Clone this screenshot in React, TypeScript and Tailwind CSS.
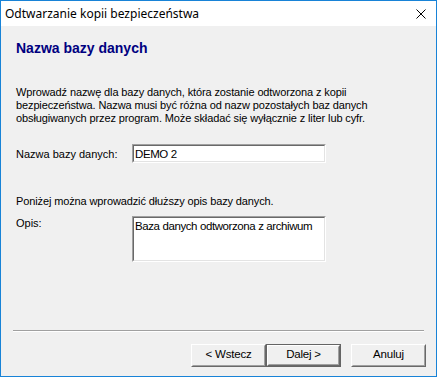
import React from "react";

const sans = { fontFamily: '"Liberation Sans", Arial, sans-serif' };

// classic sunken edit field (Win9x style)
function Sunken({ className, children }: { className: string; children: React.ReactNode }) {
  return (
    <div className={`border border-t-[#a0a0a0] border-l-[#a0a0a0] border-b-white border-r-white ${className}`}>
      <div className="h-full whitespace-nowrap border border-t-[#696969] border-l-[#696969] border-b-[#e3e3e3] border-r-[#e3e3e3] bg-white px-[1px] pt-[1px] text-[11.5px] leading-[14px] tracking-[-0.4px] text-black">
        {children}
      </div>
    </div>
  );
}

function WinButton({ label, isDefault }: { label: string; isDefault?: boolean }) {
  const inner = (
    <div className="flex h-full items-center justify-center border border-t-white border-l-white border-b-[#696969] border-r-[#696969] bg-[#f0f0f0]">
      <div className="flex h-full w-full items-center justify-center border border-t-[#f0f0f0] border-l-[#f0f0f0] border-b-[#a0a0a0] border-r-[#a0a0a0] pb-[1px] text-[11.5px] tracking-[-0.2px] text-black">
        {label}
      </div>
    </div>
  );
  if (isDefault) {
    return <div className="h-[23px] w-[75px] border border-[#646464]">{inner}</div>;
  }
  return <div className="h-[23px] w-[75px]">{inner}</div>;
}

export default function App() {
  return (
    <div className="flex h-[377px] w-[437px] flex-col border border-[#1883d7] bg-[#f0f0f0]" style={sans}>
      {/* title bar */}
      <div className="flex h-[25px] items-center justify-between bg-white pl-[4px] pr-[10px]">
        <span className="text-[12px] text-black" style={{ fontFamily: '"Noto Sans", "Liberation Sans", sans-serif' }}>
          Odtwarzanie kopii bezpieczeństwa
        </span>
        <svg width="10" height="10" viewBox="0 0 10 10">
          <path d="M0.5 0.5 L9.5 9.5 M9.5 0.5 L0.5 9.5" stroke="#000" strokeWidth="1" />
        </svg>
      </div>

      <div className="flex flex-1 flex-col px-[15px]">
        <h1 className="mt-[14px] text-[14px] font-bold leading-[16px] text-[#000080]">Nazwa bazy danych</h1>

        <p className="mt-[30px] text-[11px] leading-[13px] tracking-[-0.12px] text-black">
          Wprowadź nazwę dla bazy danych, która zostanie odtworzona z kopii
          <br />
          bezpieczeństwa. Nazwa musi być różna od nazw pozostałych baz danych
          <br />
          obsługiwanych przez program. Może składać się wyłącznie z liter lub cyfr.
        </p>

        <div className="mt-[19px] flex items-start">
          <span className="mt-[4px] w-[116px] text-[11px] leading-[13px] text-black">Nazwa bazy danych:</span>
          <Sunken className="h-[19px] w-[194px]">DEMO 2</Sunken>
        </div>

        <p className="mt-[32px] text-[11px] leading-[13px] tracking-[-0.12px] text-black">
          Poniżej można wprowadzić dłuższy opis bazy danych.
        </p>

        <div className="mt-[8px] flex items-start">
          <span className="mt-[1px] w-[116px] text-[11px] leading-[13px] text-black">Opis:</span>
          <Sunken className="h-[46px] w-[194px]">Baza danych odtworzona z archiwum</Sunken>
        </div>

        <div className="mt-auto">
          <div className="mx-[-3px] border-t border-b border-t-[#a0a0a0] border-b-white" />
          <div className="mb-[9px] mr-[-5px] mt-[12px] flex justify-end">
            <WinButton label="< Wstecz" />
            <WinButton label="Dalej >" isDefault />
            <div className="w-[10px]" />
            <WinButton label="Anuluj" />
          </div>
        </div>
      </div>
    </div>
  );
}
